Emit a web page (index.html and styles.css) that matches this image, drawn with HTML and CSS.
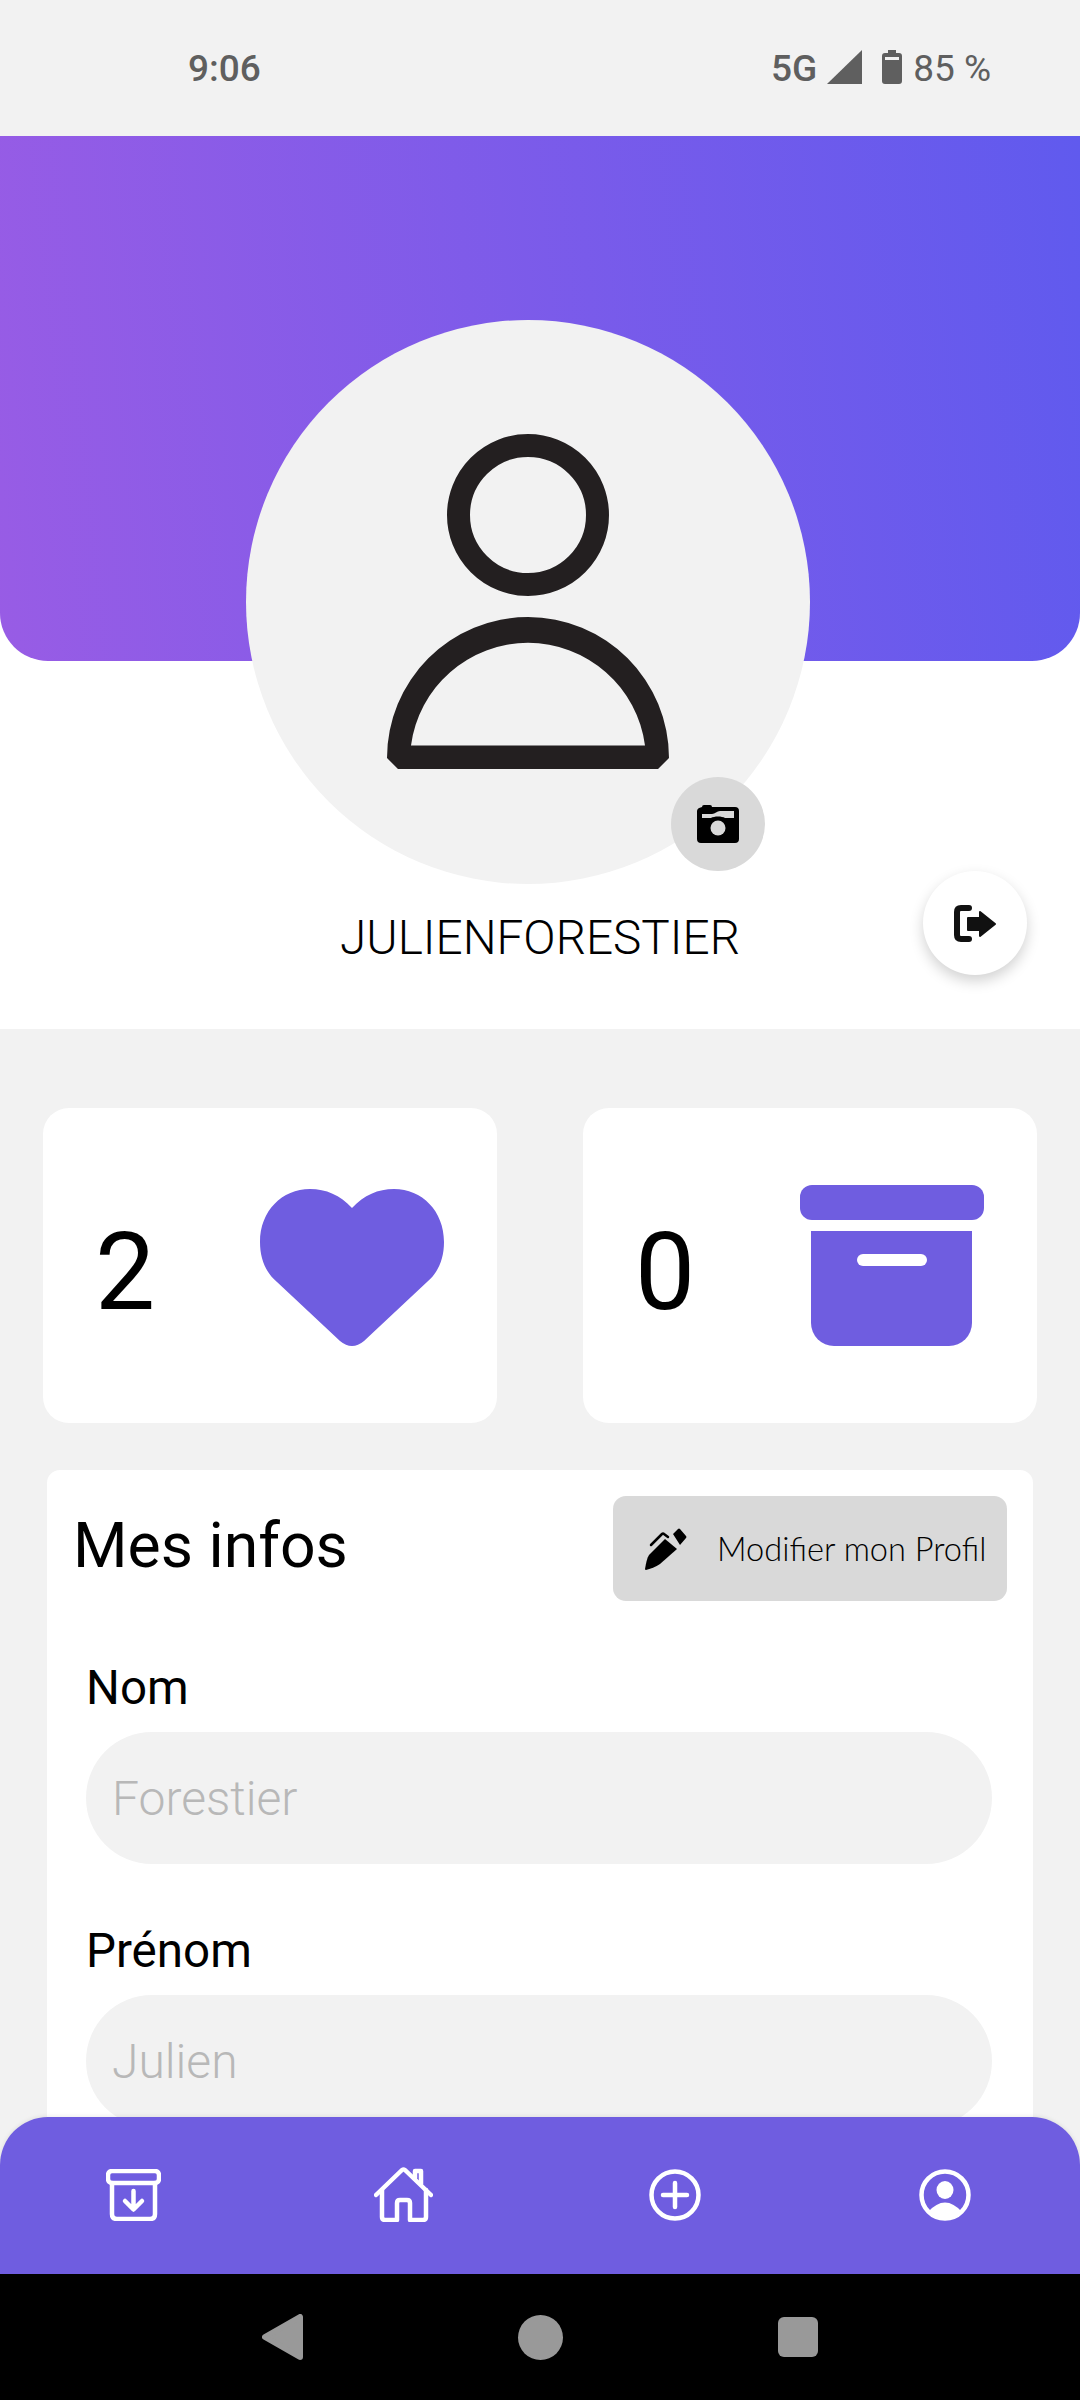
FILE: index.html
```html
<!DOCTYPE html>
<html lang="fr">
<head>
  <meta charset="UTF-8">
  <title>Mon profil</title>
  <meta name="viewport" content="width=device-width, initial-scale=1.0">
  <link rel="stylesheet" href="styles.css">
</head>
<body>
  <div class="status-bar">
    <span class="status-time">9:06</span>
    <div class="status-right">
      <span class="status-network">5G</span>
      <svg class="signal-icon" width="35" height="34" viewBox="0 0 35 34"><polygon points="35,0 35,34 0,34" fill="#5f5f5f"/></svg>
      <svg class="battery-icon" width="20" height="34" viewBox="0 0 20 34">
        <path d="M6 0H14V3H17Q20 3 20 6V31Q20 34 17 34H3Q0 34 0 31V6Q0 3 3 3H6Z" fill="#5f5f5f"/>
        <rect x="3" y="7" width="14" height="3" fill="#f2f2f2"/>
      </svg>
      <span class="status-level">85 %</span>
    </div>
  </div>

  <section class="profile">
    <div class="hero"></div>
    <div class="avatar">
      <svg width="282" height="335" viewBox="0 0 282 335">
        <circle cx="141" cy="81" r="69.5" fill="none" stroke="#231f20" stroke-width="23"/>
        <path fill="#231f20" fill-rule="evenodd" d="M0 324A141 141 0 0 1 282 324L271 335H11L0 324ZM24 311.5H258A118 118 0 0 0 24 311.5Z"/>
      </svg>
      <button class="camera-btn">
        <svg width="42" height="38" viewBox="0 0 42 38">
          <path d="M5 2Q5 0 7 0H13Q15 0 15 2H38Q42 2 42 6V34Q42 38 38 38H4Q0 38 0 34V6Q0 3 5 2Z"/>
          <path fill="#d9d9d9" d="M5 9H15C18 9 20 6 23 6H37V13H28C25 11 17 11 14 13H5Z"/>
          <circle cx="21" cy="23" r="7.5" fill="#d9d9d9"/>
        </svg>
      </button>
    </div>
    <div class="username">JULIENFORESTIER</div>
    <button class="logout-btn">
      <svg width="42" height="37" viewBox="0 0 42 37">
        <path d="M15 3H7Q3 3 3 7V30Q3 34 7 34H15" fill="none" stroke="#111" stroke-width="6" stroke-linecap="round"/>
        <path fill="#111" stroke="#111" stroke-width="2" stroke-linejoin="round" d="M14 13H26V7L41 19L26 31V25H14Z"/>
      </svg>
    </button>
  </section>

  <section class="stats">
    <div class="stat-card">
      <span class="stat-value">2</span>
      <svg class="stat-icon stat-heart" width="184" height="158" viewBox="0 0 184 158">
        <path d="M92 19C80 6 66 0 50 0C22 0 0 22 0 53C0 70 6 84 17 93L80 152Q92 162 104 152L167 93C178 84 184 70 184 53C184 22 162 0 134 0C118 0 104 6 92 19Z"/>
      </svg>
    </div>
    <div class="stat-card">
      <span class="stat-value">0</span>
      <svg class="stat-icon" width="184" height="162" viewBox="0 0 184 162">
        <rect x="0" y="0" width="184" height="35" rx="12"/>
        <path d="M11 46H172V138A23 23 0 0 1 149 161H34A23 23 0 0 1 11 138Z"/>
        <rect x="57" y="69" width="70" height="12" rx="6" fill="#fff"/>
      </svg>
    </div>
  </section>

  <section class="infos">
    <div class="infos-head">
      <h2>Mes infos</h2>
      <button class="edit-btn">
        <svg width="42" height="42" viewBox="0 0 42 42">
          <path d="M0 41C1 35 2 30 4 27L20 11L32 21L15 36C11 39 5 41 1 42Q0 42 0 41Z"/>
          <path d="M28 6L33 1Q34 0 35 1L41 8Q42 9 41 10L35 17Z"/>
          <path d="M6 17L17 6Q18 5 19 6L23 9" fill="none" stroke="#000" stroke-width="2.5" stroke-linecap="round"/>
        </svg>
        <span>Modifier mon Profil</span>
      </button>
    </div>
    <div class="field">
      <label>Nom</label>
      <div class="field-input">Forestier</div>
    </div>
    <div class="field">
      <label>Prénom</label>
      <div class="field-input">Julien</div>
    </div>
  </section>

  <nav class="bottom-nav">
    <a class="nav-item nav-item-left">
      <svg width="55" height="52" viewBox="0 0 55 52" class="nav-icon">
        <rect x="2" y="2" width="51" height="12" rx="4"/>
        <path d="M6 14V45Q6 50 11 50H44Q49 50 49 45V14"/>
        <path d="M27.5 22V40M19 32L27.5 40.5L36 32"/>
      </svg>
    </a>
    <a class="nav-item nav-item-left">
      <svg width="59" height="55" viewBox="0 0 59 55" class="nav-icon">
        <path d="M2 28L28 3Q29.5 2 31 3L57 28"/>
        <path d="M8 23V50Q8 53 11 53H23V36Q23 33 26 33H33Q36 33 36 36V53H49Q52 53 52 50V23"/>
        <path d="M41 11V4H47V17"/>
      </svg>
    </a>
    <a class="nav-item">
      <svg width="52" height="52" viewBox="0 0 52 52" class="nav-icon">
        <circle cx="26" cy="26" r="23.5"/>
        <path d="M14 26H38M26 14V38"/>
      </svg>
    </a>
    <a class="nav-item">
      <svg width="52" height="52" viewBox="0 0 52 52" class="nav-icon">
        <circle cx="26" cy="26" r="23.5"/>
        <ellipse cx="26" cy="21" rx="8.5" ry="9" fill="#fff" stroke="none"/>
        <path d="M9 43Q26 24 43 43A24 24 0 0 1 9 43Z" fill="#fff" stroke="none"/>
      </svg>
    </a>
  </nav>

  <div class="system-bar">
    <svg width="41" height="46" viewBox="0 0 41 46"><path class="sys-shape" d="M3 23L38 3V43Z"/></svg>
    <span class="sys-circle"></span>
    <span class="sys-square"></span>
  </div>
</body>
</html>
```

FILE: styles.css
```css
:root {
  --purple: #6f5de0;
  --grey-bg: #f2f2f2;
  --grey-btn: #d9d9d9;
}

* {
  box-sizing: border-box;
}

body {
  margin: 0;
  width: 1080px;
  height: 2400px;
  position: relative;
  overflow: hidden;
  background-color: var(--grey-bg);
  font-family: Roboto, sans-serif;
  color: #000;
}

button {
  border: none;
  padding: 0;
  font-family: inherit;
}

.status-bar {
  height: 136px;
  padding: 0 89px 0 188px;
  display: flex;
  justify-content: space-between;
  align-items: center;
  color: #5f5f5f;
  font-size: 37px;
  font-weight: 500;
}

.status-right {
  display: flex;
  align-items: center;
  gap: 12px;
}

.status-network {
  margin-right: -2px;
}

.signal-icon {
  margin-top: -2px;
}

.battery-icon {
  margin: -2px -1px 0 8px;
}

.status-level {
  font-weight: 400;
}

.profile {
  height: 893px;
  position: relative;
  background-color: #fff;
}

.hero {
  height: 525px;
  border-radius: 0 0 48px 48px;
  background: linear-gradient(84deg, #985ce5 0%, #605aee 100%);
}

.avatar {
  width: 564px;
  height: 564px;
  margin: -341px 0 0 246px;
  position: relative;
  display: flex;
  justify-content: center;
  padding-top: 114px;
  border-radius: 50%;
  background-color: var(--grey-bg);
}

.camera-btn {
  position: absolute;
  left: 425px;
  top: 457px;
  width: 94px;
  height: 94px;
  border-radius: 50%;
  background-color: var(--grey-btn);
  display: flex;
  align-items: center;
  justify-content: center;
}

.username {
  margin-top: 28px;
  text-align: center;
  font-size: 47.7px;
  font-weight: 300;
  line-height: 52px;
}

.logout-btn {
  position: absolute;
  left: 923px;
  top: 735px;
  width: 104px;
  height: 104px;
  border-radius: 50%;
  background-color: #fff;
  box-shadow: 0 6px 14px rgba(0, 0, 0, 0.18);
  display: flex;
  align-items: center;
  justify-content: center;
}

.stats {
  display: flex;
  gap: 86px;
  padding: 79px 43px 0;
}

.stat-card {
  width: 454px;
  height: 315px;
  padding: 0 53px 0 52px;
  display: flex;
  justify-content: space-between;
  align-items: center;
  background-color: #fff;
  border-radius: 26px;
}

.stat-value {
  margin-top: 13px;
  font-size: 107px;
  font-weight: 400;
  line-height: 1;
}

.stat-icon {
  fill: var(--purple);
  margin-top: 1px;
}

.stat-heart {
  margin-top: 5px;
}

.infos {
  margin: 47px 47px 0;
  padding: 26px 26px 0 26px;
  height: 800px;
  background-color: #fff;
  border-radius: 13px;
}

.infos-head {
  display: flex;
  justify-content: space-between;
  align-items: center;
}

.infos-head h2 {
  margin: -6px 0 0;
  font-size: 62.5px;
  font-weight: 400;
}

.edit-btn {
  width: 394px;
  height: 105px;
  padding-left: 32px;
  display: flex;
  align-items: center;
  gap: 30px;
  background-color: var(--grey-btn);
  border-radius: 13px;
  font-family: Lato, sans-serif;
  font-size: 32.6px;
  font-weight: 300;
  color: #000;
}

.field {
  margin: 58px 15px 0 13px;
}

.field label {
  display: block;
  font-size: 47.5px;
  line-height: 58px;
  margin-bottom: 15px;
}

.field-input {
  height: 132px;
  padding-left: 26px;
  display: flex;
  align-items: center;
  border-radius: 66px;
  background-color: var(--grey-bg);
  font-size: 48px;
  font-weight: 300;
  color: #b8b8b8;
}

.bottom-nav {
  position: absolute;
  left: 0;
  right: 0;
  top: 2117px;
  height: 157px;
  display: grid;
  grid-template-columns: repeat(4, 1fr);
  align-items: center;
  padding-bottom: 2px;
  background-color: var(--purple);
  border-radius: 48px 48px 0 0;
  box-shadow: 0 -1px 4px rgba(0, 0, 0, 0.08);
}

.nav-item {
  display: flex;
  justify-content: center;
}

.nav-item-left svg {
  margin-left: -3px;
}

.nav-icon {
  fill: none;
  stroke: #fff;
  stroke-width: 4.5;
  stroke-linecap: round;
  stroke-linejoin: round;
}

.system-bar {
  position: absolute;
  left: 0;
  right: 0;
  bottom: 0;
  height: 126px;
  padding-left: 262px;
  display: flex;
  align-items: center;
  gap: 215px;
  background-color: #000;
}

.sys-shape {
  fill: #999;
  stroke: #999;
  stroke-width: 6;
  stroke-linejoin: round;
}

.sys-circle {
  width: 45px;
  height: 45px;
  border-radius: 50%;
  background-color: #999;
}

.sys-square {
  width: 40px;
  height: 40px;
  border-radius: 6px;
  background-color: #999;
}
```
